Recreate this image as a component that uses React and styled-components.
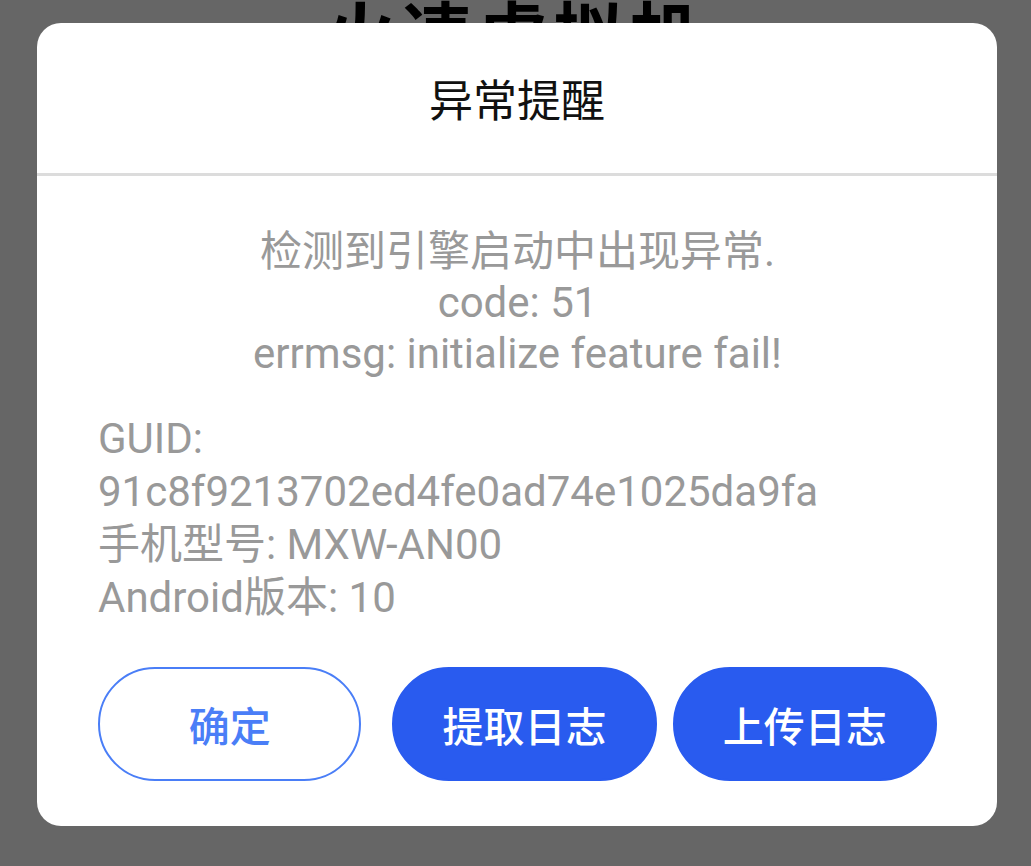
import React from 'react';
import styled, { createGlobalStyle } from 'styled-components';

const GlobalStyle = createGlobalStyle`
  html, body {
    margin: 0;
    padding: 0;
    background: #fff;
    font-family: Roboto, "Noto Sans CJK SC", sans-serif;
  }
`;

const Page = styled.div`
  height: 866px;
  display: flex;
  justify-content: center;
  overflow: hidden;
`;

const AppTitle = styled.h1`
  margin: 0;
  margin-top: -11px;
  font-size: 70px;
  line-height: 1.2;
  font-weight: 700;
  letter-spacing: 6px;
  color: #000;
  font-family: "Noto Sans CJK SC", sans-serif;
`;

const Overlay = styled.div`
  position: fixed;
  inset: 0;
  background: rgba(0, 0, 0, 0.6);
  display: flex;
  align-items: flex-start;
  padding: 23px 0 0 37px;
`;

const Dialog = styled.div`
  width: 960px;
  height: 803px;
  background: #fff;
  border-radius: 24px;
  display: flex;
  flex-direction: column;
`;

const Header = styled.div`
  height: 150px;
  display: flex;
  align-items: center;
  justify-content: center;
  border-bottom: 3px solid #dcdcdc;
`;

const Title = styled.h2`
  margin: 0;
  font-family: "Noto Sans CJK SC", sans-serif;
  font-size: 44px;
  font-weight: 400;
  color: #111;
`;

const Body = styled.div`
  flex: 1;
  display: flex;
  flex-direction: column;
  padding: 50px 60px 45px 61px;
`;

const Message = styled.div`
  text-align: center;
  color: #999;
  font-size: 42px;
  line-height: 51px;
`;

const Info = styled.div`
  margin-top: 33px;
  color: #999;
  font-size: 42px;
  line-height: 53px;
`;

const Line = styled.div``;

const Actions = styled.div`
  margin-top: auto;
  display: flex;
  gap: 16px;
`;

const Button = styled.button`
  width: ${(p) => p.$width}px;
  height: 114px;
  margin-right: ${(p) => p.$after || 0}px;
  border-radius: 57px;
  box-sizing: border-box;
  font-family: "Noto Sans CJK SC", sans-serif;
  font-size: 41px;
  font-weight: 500;
  display: flex;
  align-items: center;
  justify-content: center;
  padding: 0;
  border: 2.5px solid ${(p) => (p.$outline ? '#4a7ef7' : '#295bef')};
  background: ${(p) => (p.$outline ? '#fff' : '#295bef')};
  color: ${(p) => (p.$outline ? '#4a7ef7' : '#fff')};
`;

export default function App() {
  return (
    <>
      <GlobalStyle />
      <Page>
        <AppTitle>火速虚拟机</AppTitle>
      </Page>
      <Overlay>
        <Dialog>
          <Header>
            <Title>异常提醒</Title>
          </Header>
          <Body>
            <Message>检测到引擎启动中出现异常.</Message>
            <Message>code: 51</Message>
            <Message>errmsg: initialize feature fail!</Message>
            <Info>
              <Line>GUID:</Line>
              <Line>91c8f9213702ed4fe0ad74e1025da9fa</Line>
              <Line>手机型号: MXW-AN00</Line>
              <Line>Android版本: 10</Line>
            </Info>
            <Actions>
              <Button $outline $width={264} $after={15}>确定</Button>
              <Button $width={265}>提取日志</Button>
              <Button $width={265}>上传日志</Button>
            </Actions>
          </Body>
        </Dialog>
      </Overlay>
    </>
  );
}
